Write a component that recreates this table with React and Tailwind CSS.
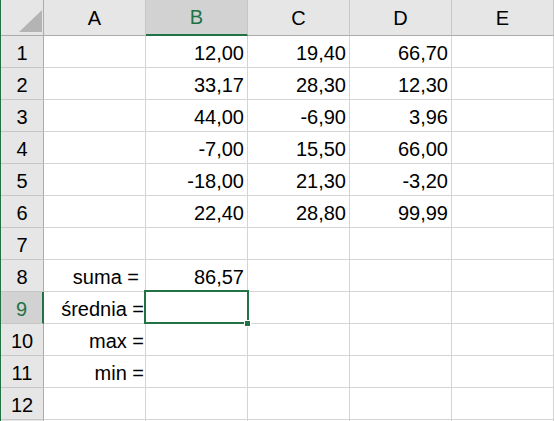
const cols = ["A", "B", "C", "D", "E"];

const data = {
  1: { B: "12,00", C: "19,40", D: "66,70" },
  2: { B: "33,17", C: "28,30", D: "12,30" },
  3: { B: "44,00", C: "-6,90", D: "3,96" },
  4: { B: "-7,00", C: "15,50", D: "66,00" },
  5: { B: "-18,00", C: "21,30", D: "-3,20" },
  6: { B: "22,40", C: "28,80", D: "99,99" },
  8: { A: "suma =", B: "86,57" },
  9: { A: "średnia =" },
  10: { A: "max =" },
  11: { A: "min =" },
};

// 13th row only peeks in at the bottom edge, so it has no label
const rows = Array.from({ length: 13 }, (_, i) => i + 1);

function Cell({ row, col }) {
  const value = data[row]?.[col];
  const isLabel = col === "A";
  const selected = row === 9 && col === "B";
  return (
    <div
      className={`relative flex h-[32px] items-end justify-end border-r border-b border-[#d4d4d4] pb-[2px] leading-[24px] ${isLabel ? (row === 8 ? "pr-[6px]" : "pr-[1px]") : "pr-[3px]"}`}
    >
      {value}
      {selected && (
        <>
          <div className="absolute -top-[2px] -left-[2px] z-10 h-[34px] w-[105px] border-2 border-[#217346]" />
          <div className="absolute top-[28px] left-[98px] z-10 h-[7px] w-[7px] border border-white bg-[#217346]" />
        </>
      )}
    </div>
  );
}

export default function App() {
  return (
    <div
      className="h-[421px] w-[554px] overflow-hidden border-l border-[#217346] bg-white text-[20px] text-black"
      style={{ fontFamily: '"Liberation Sans", Arial, sans-serif' }}
    >
      <div className="grid grid-cols-[43px_repeat(5,102px)]">
        <div className="relative h-[36px] border-r border-b border-[#ababab] bg-[#e6e6e6]">
          <svg className="absolute top-0 left-0" width="43" height="35" viewBox="0 0 43 35">
            <polygon points="18,32 41,32 41,10" fill="#b4b4b4" />
          </svg>
        </div>
        {cols.map((c) => (
          <div
            key={c}
            className={`flex h-[36px] items-end justify-center border-r pb-[5px] leading-[24px] ${c === "B" ? "border-b-2 border-r-[#c6c6c6] border-b-[#217346] bg-[#d2d2d2] text-[#217346]" : "border-b border-r-[#c6c6c6] border-b-[#ababab] bg-[#e6e6e6]"}`}
          >
            {c}
          </div>
        ))}
        {rows.map((r) => (
          <div key={r} className="contents">
            <div
              className={`flex h-[32px] items-end justify-center border-b border-[#c6c6c6] pb-[2px] leading-[24px] ${r === 9 ? "border-r-2 border-r-[#217346] bg-[#d2d2d2] text-[#217346]" : "border-r border-r-[#ababab] bg-[#e6e6e6]"}`}
            >
              {r < 13 ? r : ""}
            </div>
            {cols.map((c) => (
              <Cell key={c} row={r} col={c} />
            ))}
          </div>
        ))}
      </div>
    </div>
  );
}
